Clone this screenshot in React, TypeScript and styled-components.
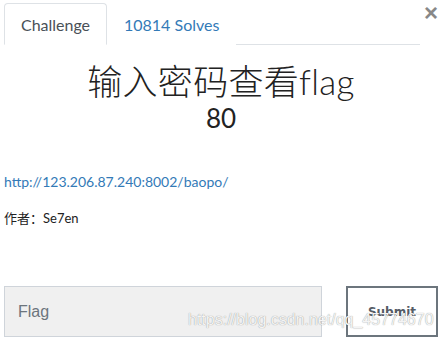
import React from 'react';
import styled, { createGlobalStyle } from 'styled-components';

const GlobalStyle = createGlobalStyle`
  html, body {
    margin: 0;
    padding: 0;
    background: #fff;
  }
  body {
    font-family: Lato, "Noto Sans CJK SC", sans-serif;
    color: #212529;
  }
`;

export default function App() {
  return (
    <Modal>
      <GlobalStyle />
      <Header>
        <Tabs>
          <Tab $active>Challenge</Tab>
          <Tab>10814 Solves</Tab>
        </Tabs>
        <Close>×</Close>
      </Header>

      <Title>输入密码查看flag</Title>
      <Points>80</Points>

      <Description>
        <Link href="#">http://123.206.87.240:8002/baopo/</Link>
        <Author>作者：Se7en</Author>
      </Description>

      <SubmitRow>
        <FlagInput placeholder="Flag" />
        <SubmitButton>Submit</SubmitButton>
        <Watermark>https://blog.csdn.net/qq_45774670</Watermark>
      </SubmitRow>
    </Modal>
  );
}

const Modal = styled.div`
  width: 441px;
  height: 342px;
  box-sizing: border-box;
  padding: 3px 3px 0 4px;
  overflow: hidden;
`;

const Header = styled.div`
  display: flex;
  align-items: flex-start;
`;

const Tabs = styled.div`
  display: flex;
  width: 420px;
  height: 41px;
  border-bottom: 1px solid #dee2e6;
`;

const Tab = styled.div<{ $active?: boolean }>`
  box-sizing: border-box;
  height: 42px;
  padding: 0 16px;
  display: flex;
  align-items: center;
  font-size: 16px;
  color: ${(p) => (p.$active ? '#495057' : '#337ab7')};
  background: #fff;
  border: 1px solid ${(p) => (p.$active ? '#dee2e6' : 'transparent')};
  border-bottom-color: ${(p) => (p.$active ? '#fff' : 'transparent')};
  border-radius: 4px 4px 0 0;
  width: ${(p) => (p.$active ? '103px' : 'auto')};
  justify-content: ${(p) => (p.$active ? 'center' : 'flex-start')};
`;

const Close = styled.div`
  margin-left: 4px;
  margin-top: -2px;
  font-family: "Liberation Sans", sans-serif;
  font-size: 24px;
  font-weight: 700;
  line-height: 24px;
  color: #888;
`;

const Title = styled.h1`
  margin: 16px 0 0;
  text-align: center;
  font-size: 35px;
  font-weight: 300;
  line-height: 40px;
  letter-spacing: 0.3px;
  color: #222;
  font-family: Lato, "Noto Sans CJK SC", sans-serif;
`;

const Points = styled.h2`
  margin: 0;
  text-align: center;
  font-size: 26px;
  font-weight: 400;
  line-height: 34px;
  color: #222;
`;

const Description = styled.div`
  margin-top: 37px;
  display: flex;
  flex-direction: column;
  gap: 16px;
  font-size: 14px;
  line-height: 20px;
`;

const Link = styled.a`
  color: #337ab7;
  text-decoration: none;
`;

const Author = styled.div`
  color: #222;
  font-size: 13px;
`;

const SubmitRow = styled.div`
  position: relative;
  margin-top: 58px;
  display: flex;
  gap: 24px;
`;

const FlagInput = styled.input`
  box-sizing: border-box;
  width: 318px;
  height: 51px;
  padding: 0 13px;
  background: #f0f0f0;
  border: 1px solid #cfd4da;
  font-family: "Liberation Sans", sans-serif;
  font-size: 16px;
  outline: none;

  &::placeholder {
    color: #6c757d;
  }
`;

const SubmitButton = styled.button`
  box-sizing: border-box;
  width: 92px;
  height: 51px;
  background: #fff;
  border: 2px solid #6c757d;
  font-family: "DejaVu Sans", sans-serif;
  font-size: 12px;
  font-weight: 700;
  color: #555c66;
  cursor: pointer;
`;

const Watermark = styled.span`
  position: absolute;
  left: 184px;
  top: 25px;
  font-family: "Liberation Sans", sans-serif;
  font-size: 16px;
  color: #f4f4f4;
  text-shadow: 0 0 1px rgba(0, 0, 0, 0.45);
  pointer-events: none;
  white-space: nowrap;
`;
